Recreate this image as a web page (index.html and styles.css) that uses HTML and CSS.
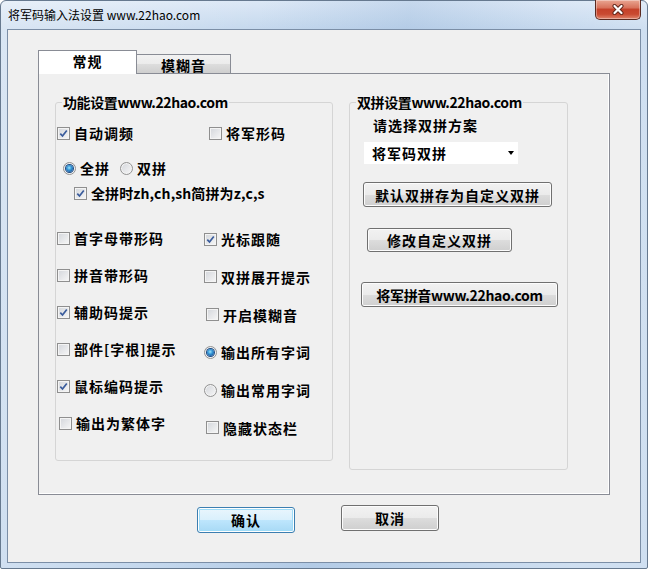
FILE: index.html
```html
<!doctype html>
<html lang="zh-CN">

<head>
    <meta charset="UTF-8">
    <meta name="viewport" content="width=device-width, initial-scale=1.0">
    <title>将军码输入法设置 www.22hao.com</title>
    <link rel="stylesheet" href="styles.css">
</head>

<body>
    <div class="window">
        <div class="titlebar">
            <span class="title">将军码输入法设置 www.22hao.com</span>
            <button class="close" type="button" title="关闭">
                <svg width="14" height="11" viewBox="0 0 14 11">
                    <path d="M3.5 2 L10.5 9 M10.5 2 L3.5 9" stroke="#5e2418" stroke-width="4" stroke-linecap="round" fill="none" />
                    <path d="M3.5 2 L10.5 9 M10.5 2 L3.5 9" stroke="#fff" stroke-width="2.2" stroke-linecap="round" fill="none" />
                </svg>
            </button>
        </div>

        <div class="client">
            <div class="tabs">
                <div class="tab active">常规</div>
                <div class="tab">模糊音</div>
            </div>

            <div class="pane">
                <!-- 功能设置 -->
                <fieldset class="group group-func">
                    <legend>功能设置www.22hao.com</legend>

                    <div class="opt-line first">
                        <label class="opt"><span class="cb"><svg width="9" height="9" viewBox="0 0 9 9"><path d="M1.3 4.6 L3.5 7 L7.8 1.4" /></svg></span>自动调频</label>
                        <label class="opt"><span class="cb"></span>将军形码</label>
                    </div>

                    <div class="opt-line mode">
                        <label class="opt"><span class="rb on"></span>全拼</label>
                        <label class="opt"><span class="rb"></span>双拼</label>
                    </div>

                    <div class="opt-line sub">
                        <label class="opt tight"><span class="cb"><svg width="9" height="9" viewBox="0 0 9 9"><path d="M1.3 4.6 L3.5 7 L7.8 1.4" /></svg></span>全拼时zh,ch,sh简拼为z,c,s</label>
                    </div>

                    <div class="opt-cols">
                        <div class="opt-stack">
                            <label class="opt"><span class="cb"></span>首字母带形码</label>
                            <label class="opt"><span class="cb"></span>拼音带形码</label>
                            <label class="opt"><span class="cb"><svg width="9" height="9" viewBox="0 0 9 9"><path d="M1.3 4.6 L3.5 7 L7.8 1.4" /></svg></span>辅助码提示</label>
                            <label class="opt"><span class="cb"></span>部件[字根]提示</label>
                            <label class="opt"><span class="cb"><svg width="9" height="9" viewBox="0 0 9 9"><path d="M1.3 4.6 L3.5 7 L7.8 1.4" /></svg></span>鼠标编码提示</label>
                            <label class="opt nudge"><span class="cb"></span>输出为繁体字</label>
                        </div>
                        <div class="opt-stack right">
                            <label class="opt"><span class="cb"><svg width="9" height="9" viewBox="0 0 9 9"><path d="M1.3 4.6 L3.5 7 L7.8 1.4" /></svg></span>光标跟随</label>
                            <label class="opt"><span class="cb"></span>双拼展开提示</label>
                            <label class="opt nudge"><span class="cb"></span>开启模糊音</label>
                            <label class="opt"><span class="rb on"></span>输出所有字词</label>
                            <label class="opt"><span class="rb"></span>输出常用字词</label>
                            <label class="opt nudge"><span class="cb"></span>隐藏状态栏</label>
                        </div>
                    </div>
                </fieldset>

                <!-- 双拼设置 -->
                <fieldset class="group group-dual">
                    <legend>双拼设置www.22hao.com</legend>
                    <div class="dual-body">
                        <div class="dual-head">请选择双拼方案</div>
                        <div class="combo">
                            <span>将军码双拼</span>
                            <span class="combo-arrow"></span>
                        </div>
                        <button class="btn btn-wide" type="button">默认双拼存为自定义双拼</button>
                        <button class="btn btn-edit" type="button">修改自定义双拼</button>
                        <button class="btn btn-site" type="button">将军拼音www.22hao.com</button>
                    </div>
                </fieldset>
            </div>

            <div class="actions">
                <button class="btn btn-default" type="button">确认</button>
                <button class="btn" type="button">取消</button>
            </div>
        </div>
    </div>
</body>

</html>
```

FILE: styles.css
```css
* {
    margin: 0;
    padding: 0;
    box-sizing: border-box;
}

body {
    width: 648px;
    height: 569px;
    font-family: "Noto Sans CJK SC", "Liberation Sans", sans-serif;
    color: #000;
    background: #fff;
}

/* 窗口外框 */
.window {
    display: flex;
    flex-direction: column;
    width: 648px;
    height: 569px;
    border: 1px solid #66798f;
    border-radius: 6px 6px 2px 2px;
    background:
        linear-gradient(100deg, rgba(255, 255, 255, .35) 0, rgba(255, 255, 255, 0) 35%, rgba(120, 160, 205, .22) 55%, rgba(255, 255, 255, 0) 75%, rgba(255, 255, 255, .2) 90%),
        linear-gradient(#dce8f6 0, #c6d9ee 27px, #c3d7ed 100%);
}

.titlebar {
    display: flex;
    align-items: center;
    flex: none;
    height: 28px;
}

.title {
    padding-left: 7px;
    font-size: 12px;
    line-height: 16px;
}

.close {
    align-self: flex-start;
    display: flex;
    align-items: center;
    justify-content: center;
    width: 46px;
    height: 20px;
    margin: -1px 6px 0 auto;
    border: 1px solid #5a2a20;
    border-top: none;
    border-radius: 0 0 5px 5px;
    background: linear-gradient(#e9a692 0, #d8735c 40%, #c5422a 50%, #c94a31 75%, #e0866d 100%);
    box-shadow: inset 0 0 0 1px rgba(255, 255, 255, .35);
}

/* 客户区 */
.client {
    flex: none;
    width: 634px;
    height: 534px;
    margin-left: 6px;
    padding: 20px 0 0 30px;
    border: 1px solid #7b8ea6;
    background: #f0f0f0;
}

.tabs {
    display: flex;
    align-items: flex-end;
    height: 23px;
}

.tab {
    width: 94px;
    height: 19px;
    padding-top: 1px;
    border: 1px solid #898c95;
    border-bottom: none;
    background: linear-gradient(#f2f2f2 0, #ebebeb 50%, #dddddd 50%, #cfcfcf 100%);
    font-size: 14px;
    font-weight: 700;
    line-height: 18px;
    letter-spacing: 1px;
    text-align: center;
}

.tab + .tab {
    border-left: none;
}

.tab.active {
    position: relative;
    z-index: 1;
    width: 99px;
    height: 24px;
    margin-bottom: -1px;
    padding-top: 0;
    background: #fff;
    line-height: 20px;
}

.pane {
    display: flex;
    align-items: flex-start;
    gap: 16px;
    width: 572px;
    height: 422px;
    padding: 20px 0 0 16px;
    border: 1px solid #898c95;
    background: #f0f0f0;
    box-shadow: inset -1px -1px 0 #fff;
}

/* 分组框 */
.group {
    min-width: 0;
    padding: 0 0 0 1px;
    border: 1px solid #d5d5d5;
    border-radius: 3px;
}

.group legend {
    margin-left: 5px;
    padding: 0 1px;
    font-size: 14px;
    font-weight: 700;
    line-height: 16px;
    letter-spacing: -.4px;
}

.group-func {
    width: 278px;
    height: 367px;
}

.group-dual {
    width: 219px;
    height: 376px;
    padding-left: 0;
}

.group-dual legend {
    margin-left: 6px;
}

/* 选项 */
.opt {
    display: flex;
    align-items: center;
    gap: 4px;
    height: 20px;
    font-size: 14px;
    font-weight: 700;
    line-height: 20px;
    letter-spacing: 1px;
    white-space: nowrap;
}

.opt.tight {
    letter-spacing: .1px;
}

.opt.nudge {
    margin-left: 2px;
}

.opt-line {
    display: flex;
}

.opt-line.first {
    margin-top: 13px;
}

.opt-line.first .opt:first-child {
    width: 152px;
}

.opt-line.mode {
    gap: 10px;
    margin-top: 15px;
    padding-left: 6px;
}

.opt-line.sub {
    margin-top: 5px;
    padding-left: 17px;
}

.opt-cols {
    display: grid;
    grid-template-columns: 147px auto;
    margin-top: 25px;
}

.opt-stack {
    display: flex;
    flex-direction: column;
    gap: 17px;
}

.opt-stack.right {
    gap: 17.8px;
    padding-top: 1px;
}

.cb,
.rb {
    flex: none;
    display: grid;
    place-items: center;
    width: 13px;
    height: 13px;
    border: 1px solid #8f8f8f;
    background: linear-gradient(135deg, #d3d6db 0, #f7f7f7 100%);
    box-shadow: inset 0 0 0 1px #f4f4f4;
}

.cb svg path {
    fill: none;
    stroke: #3a5c9c;
    stroke-width: 1.7;
}

.rb {
    border-color: #929292;
    border-radius: 50%;
}

.rb.on::after {
    content: "";
    width: 7px;
    height: 7px;
    border-radius: 50%;
    background: radial-gradient(circle at 45% 40%, #9fe4fb 0, #3596d6 40%, #164f95 85%);
    box-shadow: 0 0 0 1px #1d4a82;
}

/* 双拼设置 */
.dual-body {
    display: flex;
    flex-direction: column;
    align-items: flex-start;
}

.dual-head {
    height: 20px;
    margin: 5px 0 0 23px;
    font-size: 14px;
    font-weight: 700;
    line-height: 20px;
    letter-spacing: 1px;
}

.combo {
    display: flex;
    align-items: center;
    justify-content: space-between;
    width: 154px;
    height: 22px;
    margin: 7px 0 0 14px;
    padding: 0 4px 0 8px;
    background: #fff;
    font-size: 14px;
    font-weight: 700;
    letter-spacing: 1px;
}

.combo-arrow {
    width: 0;
    height: 0;
    border-left: 3.5px solid transparent;
    border-right: 3.5px solid transparent;
    border-top: 4px solid #000;
}

.btn {
    height: 25px;
    border: 1px solid #707070;
    border-radius: 3px;
    background: linear-gradient(#f2f2f2 0, #ebebeb 50%, #dddddd 50%, #cfcfcf 100%);
    box-shadow: inset 0 0 0 1px #fcfcfc;
    font: 700 14px/1 "Noto Sans CJK SC", sans-serif;
    letter-spacing: 1px;
    color: #000;
}

.btn-wide {
    width: 189px;
    margin: 18px 0 0 13px;
}

.btn-edit {
    width: 145px;
    height: 24px;
    margin: 21px 0 0 17px;
}

.btn-site {
    width: 197px;
    margin: 30px 0 0 11px;
    letter-spacing: -.3px;
}

/* 底部按钮 */
.actions {
    display: flex;
    align-items: flex-start;
    gap: 46px;
    margin: 10px 0 0 159px;
}

.actions .btn {
    width: 98px;
    height: 26px;
}

.btn-default {
    margin-top: 2px;
    border-color: #3c7fb1;
    background: linear-gradient(#eaf6fd 0, #d9f0fc 50%, #bee6fd 50%, #a7d9f5 100%);
    box-shadow: inset 0 0 0 1px #fff, inset 0 0 0 2px #9fdcf8;
}
```
